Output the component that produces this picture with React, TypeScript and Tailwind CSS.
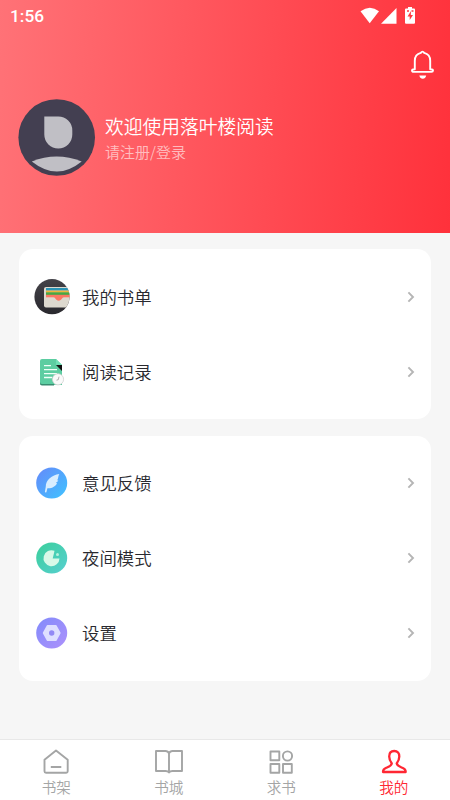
import React from "react";

const Chevron = () => (
  <svg className="w-[8px] h-[12px]" viewBox="0 0 8 12" fill="none" stroke="#b5b5b5" strokeWidth="1.9">
    <path d="M1.4 1.4 6 6 1.4 10.6" />
  </svg>
);

const BooklistIcon = () => (
  <svg className="w-[36px] h-[36px]" viewBox="0 0 36 36">
    <defs>
      <clipPath id="disc"><circle cx="18" cy="17.700" r="17.600" /></clipPath>
      <linearGradient id="dark" x1="0" y1="0" x2="0" y2="1">
        <stop offset="0" stopColor="#444349" /><stop offset="1" stopColor="#29282d" />
      </linearGradient>
    </defs>
    <g clipPath="url(#disc)">
      <rect width="36" height="36" fill="url(#dark)" />
      <rect x="10" y="8" width="30" height="20.500" rx="2" fill="#ddd9cf" />
      <rect x="12" y="9" width="24" height="2.600" fill="#2b94b5" />
      <rect x="12" y="11.600" width="24" height="2.100" fill="#f0b43c" />
      <rect x="12" y="13.300" width="24" height="2.700" fill="#45a844" />
      <rect x="12" y="15.800" width="24" height="2.500" fill="#fb7863" />
      <path d="M19.500 18.100c1.800 0 2 3.700 5.200 3.700s3.400-3.700 5.200-3.700Z" fill="#fb7863" />
    </g>
  </svg>
);

const HistoryIcon = () => (
  <svg className="w-[36px] h-[36px]" viewBox="0 0 36 36">
    <path d="M8 5h14l6 6v20H8q-2 0-2-2V7q0-2 2-2Z" fill="#5ccda1" />
    <path d="M6 28v1.500q0 2 2 2h12V30H8q-2 0-2-2Z" fill="#398b70" />
    <path d="m22 5 6 6h-6Z" fill="#70dfb5" />
    <path d="M22 11h6v6Z" fill="#111" />
    <path d="M10 11.700h7M10 15.700h13M10 19.700h13M10 23.500h8" stroke="#effff8" strokeWidth="1.300" />
    <circle cx="24" cy="25.300" r="5.600" fill="#fafafa" stroke="#d0d1d1" strokeWidth=".8" />
    <path d="m25 22.700-.7 3-1.800.5" fill="none" stroke="#999" strokeWidth=".8" />
  </svg>
);

const FeedbackIcon = () => (
  <svg className="w-[36px] h-[36px]" viewBox="0 0 36 36">
    <defs><linearGradient id="blue" x1="0" y1="0" x2="1" y2="1">
      <stop offset="0" stopColor="#6689fa" /><stop offset="1" stopColor="#3fc3ff" />
    </linearGradient></defs>
    <circle cx="17.700" cy="18" r="15.500" fill="url(#blue)" />
    <path d="M25.300 9C18 10 11.600 15 11.800 21.500l-.9 5.300q.3 1.300 1.500.4l1-3.900c4.500.4 8.300-2 9.700-5l-1.300-.2 2.600-2.400-1.200-.4c1.200-1.800.8-3.700 2.100-6.300Z" fill="#d8edff" />
  </svg>
);

const NightIcon = () => (
  <svg className="w-[36px] h-[36px]" viewBox="0 0 36 36">
    <defs><linearGradient id="green" x1="0" y1="0" x2="1" y2="1">
      <stop offset="0" stopColor="#3bcf9b" /><stop offset="1" stopColor="#57cfd0" />
    </linearGradient></defs>
    <circle cx="17.700" cy="18" r="15.500" fill="url(#green)" />
    <path d="M20.500 10.800A8 8 0 1 0 25.500 18.400h-6.800l1.100-4.300Z" fill="#d8f9e8" />
    <circle cx="23.500" cy="14.500" r="1.500" fill="#b8f1dc" />
  </svg>
);

const SettingsIcon = () => (
  <svg className="w-[36px] h-[36px]" viewBox="0 0 36 36">
    <defs><linearGradient id="purple" x1="0" y1="0" x2="1" y2="1">
      <stop offset="0" stopColor="#828bfb" /><stop offset="1" stopColor="#ad91fb" />
    </linearGradient></defs>
    <circle cx="17.700" cy="18" r="15.500" fill="url(#purple)" />
    <path d="M13.700 10.800h8l4 7.200-4 7.200h-8L9.700 18Z" fill="#dedfff" stroke="#dedfff" strokeWidth="1.800" strokeLinejoin="round" />
    <circle cx="17.700" cy="18" r="2.700" fill="#9289f5" />
  </svg>
);

const Row = ({ icon, label }: { icon: React.ReactNode; label: string }) => (
  <div className="flex h-[75px] items-center pl-[15px] pr-[16px]">
    {icon}
    <span className="ml-[12px] flex-1 text-[17.4px] leading-[26px] text-[#29292f]">{label}</span>
    <Chevron />
  </div>
);

const Tab = ({ label, active, children }: { label: string; active?: boolean; children: React.ReactNode }) => (
  <div className={`flex flex-1 flex-col items-center pt-[7px] ${active ? "text-[#ff2733]" : "text-[#a4a5a5]"}`}>
    <svg className="h-[30px] w-[30px]" viewBox="0 0 30 30" fill="none" stroke="currentColor" strokeWidth="1.900" strokeLinejoin="round">
      {children}
    </svg>
    <span className="text-[14.6px] leading-[20px]">{label}</span>
  </div>
);

export default function App() {
  return (
    <div className="flex h-[800px] w-[450px] flex-col overflow-hidden bg-[#f6f6f6] font-['Noto_Sans_CJK_SC',sans-serif] font-[350]">
      <header className="h-[233px] shrink-0 bg-[linear-gradient(94deg,#ff7277_0%,#ff313b_100%)] text-white">
        <div className="flex h-[32px] items-center justify-between pl-[10px] pr-[34px]">
          <span className="font-[Roboto,sans-serif] text-[17.3px] font-medium leading-[20px]">1:56</span>
          <svg className="h-[18px] w-[56px]" viewBox="360 6 56 18" fill="white">
            <path d="M360.500 10.300q9.500-7 18.500 0L369.700 22.200Z" />
            <path d="M381 22.700 396.500 7v15.700Z" />
            <path d="M408 6h4v1.500h2q1 0 1 1v13.200q0 1-1 1h-8q-1 0-1-1V8.500q0-1 1-1h2Z" />
            <path d="m411 10-3.500 5.500h2.200V19l3.300-5h-2.200Z M407 9.300h2v1.500h-2Z M411.500 9.300h2v1.500h-2Z" fill="#ff3942" />
          </svg>
        </div>
        <div className="flex h-[66px] justify-end pr-[14px] pt-[16px]">
          <svg className="h-[32px] w-[26px]" viewBox="0 0 26 32" fill="none" stroke="white" strokeWidth="1.900" strokeLinejoin="round">
            <path d="M4.800 21.300v-8.500c0-4.200 2.200-7 6-7.900q1.700-2.500 3.400 0c3.800.9 6 3.700 6 7.900v8.500q2.800 0 2.800 1.300t-1.500 1.300h-18Q2 23.900 2 22.600t2.800-1.300Z" />
            <path d="M9.300 27.600h6.900q-.8 3.200-3.400 3.200t-3.500-3.200Z" fill="white" stroke="none" />
          </svg>
        </div>
        <div className="flex pl-[18px]">
          <svg className="h-[78px] w-[78px]" viewBox="0 0 78 78">
            <circle cx="38.700" cy="39.500" r="38.300" fill="#433f51" />
            <path d="M26.300 18.500h14a14 14 0 0 1 14 14v4a14 14 0 0 1-28 0Z" fill="#c0bfc5" />
            <path d="M13.800 63.500Q38.500 53.300 63.700 63.500Q39 83.500 13.800 63.500Z" fill="#c0bfc5" />
          </svg>
          <div className="ml-[9px] flex flex-col pt-[14px]">
            <span className="text-[18.75px] leading-[28px]">欢迎使用落叶楼阅读</span>
            <span className="text-[15px] leading-[23px] text-white/60">请注册/登录</span>
          </div>
        </div>
      </header>

      <main className="flex flex-1 flex-col gap-[17px] px-[19px] pt-[16px]">
        <section className="h-[170px] rounded-[14px] bg-white pt-[10px]">
          <Row icon={<BooklistIcon />} label="我的书单" />
          <Row icon={<HistoryIcon />} label="阅读记录" />
        </section>
        <section className="h-[245px] rounded-[14px] bg-white pt-[9.5px]">
          <Row icon={<FeedbackIcon />} label="意见反馈" />
          <Row icon={<NightIcon />} label="夜间模式" />
          <Row icon={<SettingsIcon />} label="设置" />
        </section>
      </main>

      <nav className="flex h-[61px] shrink-0 border-t border-[#e8e8e8] bg-white">
        <Tab label="书架">
          <path d="M3.500 12.800 15 3.500l11.700 9.300v11.400q0 1.500-1.500 1.500H5q-1.500 0-1.500-1.500Z M9.800 20h10.500" />
        </Tab>
        <Tab label="书城">
          <path d="M15 6.300q-1-2.300-3.500-2.300H2v20h9.500q2.500 0 3.500 1.500 1-1.500 3.500-1.500H28V4h-9.500Q16 4 15 6.300v19.500" />
        </Tab>
        <Tab label="求书">
          <path d="M4.500 4.500h8.800v8.800H4.500Z M4.500 17h8.800v8.800H4.500Z M17 17h8.800v8.800H17Z" />
          <circle cx="21.500" cy="9" r="4.600" />
        </Tab>
        <Tab label="我的" active>
          <path strokeWidth="2.300" d="M15.200 4c-3.500 0-5 2.400-5 5.400 0 3 1 4.800 2.600 7-.4 2.500-2.600 3.200-5.500 4.400-2.500 1-3.300 2.200-3.300 4.200h22.700c0-2-.8-3.200-3.300-4.200-2.900-1.200-5.300-1.900-5.700-4.400 1.600-2.200 2.600-4 2.600-7 0-3-1.600-5.400-5.100-5.400Z" />
        </Tab>
      </nav>
    </div>
  );
}
